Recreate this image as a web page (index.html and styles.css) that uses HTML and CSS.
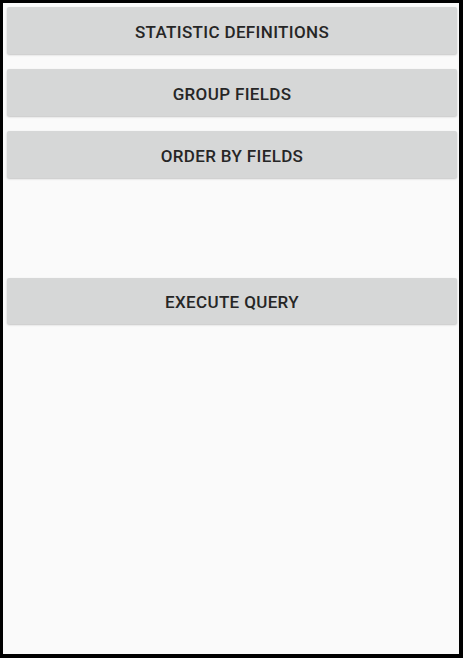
FILE: index.html
```html
<!DOCTYPE html>
<html>
  <head>
    <title>Statistics Query</title>
    <link rel="stylesheet" href="styles.css">
  </head>
  <body>
    <div class="screen">
      <button class="btn">STATISTIC DEFINITIONS</button>
      <button class="btn">GROUP FIELDS</button>
      <button class="btn">ORDER BY FIELDS</button>
      <div class="spacer"></div>
      <button class="btn">EXECUTE QUERY</button>
    </div>
  </body>
</html>
```

FILE: styles.css
```css
html,
body {
  height: 100%;
}

body {
  margin: 0;
  background-color: #000;
  padding: 3px 4px 4px 3px;
  box-sizing: border-box;
  font-family: Roboto, Arial, sans-serif;
}

.screen {
  height: 100%;
  background-color: #fafafa;
  padding: 4px 2px 0 4px;
  box-sizing: border-box;
  display: flex;
  flex-direction: column;
  gap: 15.5px;
}

.btn {
  flex: none;
  height: 46.5px;
  border: none;
  border-radius: 2px;
  background-color: #d6d7d7;
  color: #262626;
  font-family: Roboto, Arial, sans-serif;
  font-size: 17px;
  font-weight: 500;
  letter-spacing: 0.35px;
  box-shadow: 0 1px 2px rgba(0, 0, 0, 0.22);
  padding: 3px 0 0;
}

.spacer {
  flex: none;
  height: 69px;
}
```
